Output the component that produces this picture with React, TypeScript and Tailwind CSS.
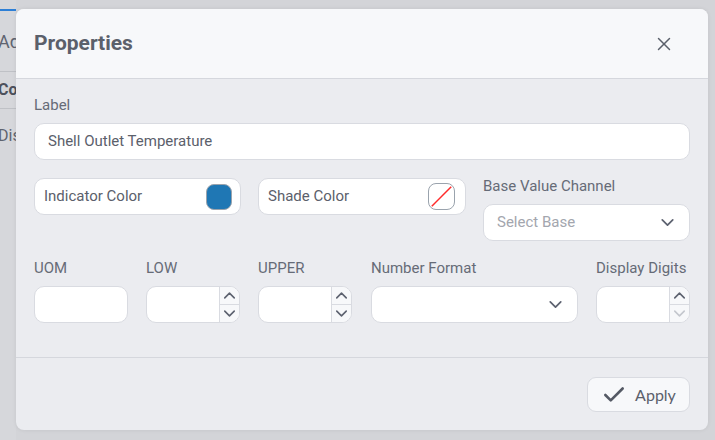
import { X, ChevronDown, ChevronUp, Check } from "lucide-react";

const font = { fontFamily: "Roboto, 'Liberation Sans', sans-serif" };

const FieldLabel = ({ children }: { children: React.ReactNode }) => (
  <div className="text-[15px] leading-[18px] text-[#666b77] mb-[9px]">{children}</div>
);

const boxCls =
  "h-[37px] bg-white border border-[#d9dbe1] rounded-[10px] flex items-center";

const Spin = ({ disabledDown }: { disabledDown?: boolean }) => (
  <div className={boxCls + " w-[94px] justify-end overflow-hidden"}>
    <div className="h-full w-[20px] border-l border-[#d9dbe1] flex flex-col bg-[#f7f8fa]">
      <div className="flex-1 flex items-center justify-center border-b border-[#d9dbe1] overflow-hidden">
        <ChevronUp size={19} strokeWidth={2} className="shrink-0 text-[#5d6270]" />
      </div>
      <div className="flex-1 flex items-center justify-center overflow-hidden">
        <ChevronDown
          size={19}
          strokeWidth={2}
          className={"shrink-0 " + (disabledDown ? "text-[#c4c7ce]" : "text-[#5d6270]")}
        />
      </div>
    </div>
  </div>
);

export default function App() {
  return (
    <div className="relative w-[715px] h-[440px] overflow-hidden bg-[#d3d4d8]" style={font}>
      {/* app behind the overlay */}
      <div className="w-[16px] h-full bg-[#d6d7db]">
        <div className="h-[9px]" />
        <div className="h-[2px] bg-[#2d7fd6]" />
        <div className="h-[61px] flex items-center border-b border-[#bfc1c6] overflow-hidden">
          <span className="ml-[-2px] text-[18px] text-[#5f6470] whitespace-nowrap">Add</span>
        </div>
        <div className="h-[37px] flex items-center border-b border-[#bfc1c6] overflow-hidden">
          <span className="ml-[-2px] text-[16px] font-bold text-[#4c515c] whitespace-nowrap">Con</span>
        </div>
        <div className="h-[54px] flex items-center overflow-hidden">
          <span className="ml-[-2px] text-[16px] text-[#5f6470] whitespace-nowrap">Dis</span>
        </div>
      </div>

      {/* modal */}
      <div className="absolute left-[16px] top-[9px] w-[692px] h-[421px] rounded-[8px] overflow-hidden bg-[#ebecf0] flex flex-col shadow-[0_0_4px_rgba(0,0,0,0.08)]">
        <div className="h-[70px] bg-[#f7f8fa] border-b border-[#d5d7dd] flex items-center justify-between pl-[18px] pr-[33px]">
          <div className="text-[21px] font-bold text-[#5b606b]">Properties</div>
          <X size={22} strokeWidth={1.6} className="text-[#5b606b]" />
        </div>

        <div className="flex-1 px-[18px] pt-[17px]">
          <FieldLabel>Label</FieldLabel>
          <div className={boxCls + " w-[656px] h-[36px] px-[13px] text-[15px] text-[#5b606b]"}>
            Shell Outlet Temperature
          </div>

          <div className="flex gap-[17px] mt-[18px] items-start">
            <div className={boxCls + " w-[207px] h-[36px] justify-between pl-[9px] pr-[8px] text-[15px] text-[#5b606b]"}>
              <span>Indicator Color</span>
              <div className="w-[26px] h-[26px] rounded-[8px] bg-[#1f77b4] border border-[#9aa3ad]" />
            </div>
            <div className={boxCls + " w-[208px] h-[36px] justify-between pl-[9px] pr-[10px] text-[15px] text-[#5b606b]"}>
              <span>Shade Color</span>
              <div className="relative w-[27px] h-[27px] rounded-[8px] bg-white border border-[#9aa3ad] overflow-hidden">
                <svg viewBox="0 0 27 27" className="absolute inset-0 w-full h-full">
                  <line x1="3" y1="24" x2="24" y2="3" stroke="#ff2b2b" strokeWidth="1.6" />
                </svg>
              </div>
            </div>
            <div className="mt-[-1px]">
              <FieldLabel>Base Value Channel</FieldLabel>
              <div className={boxCls + " w-[207px] justify-between pl-[13px] pr-[11px] text-[15px] text-[#a3a6ae]"}>
                <span>Select Base</span>
                <ChevronDown size={21} strokeWidth={2} className="text-[#5d6270]" />
              </div>
            </div>
          </div>

          <div className="flex mt-[18px]">
            <div className="w-[112px]">
              <FieldLabel>UOM</FieldLabel>
              <div className={boxCls + " w-[94px]"} />
            </div>
            <div className="w-[112px]">
              <FieldLabel>LOW</FieldLabel>
              <Spin />
            </div>
            <div className="w-[113px]">
              <FieldLabel>UPPER</FieldLabel>
              <Spin />
            </div>
            <div className="w-[225px]">
              <FieldLabel>Number Format</FieldLabel>
              <div className={boxCls + " w-[207px] justify-end pr-[11px]"}>
                <ChevronDown size={21} strokeWidth={2} className="text-[#5d6270]" />
              </div>
            </div>
            <div>
              <FieldLabel>Display Digits</FieldLabel>
              <Spin disabledDown />
            </div>
          </div>
        </div>

        <div className="h-[73px] border-t border-[#d5d7dd] flex items-center justify-end pr-[18px]">
          <button
            className="w-[103px] h-[35px] rounded-[9px] border border-[#d9dbe1] bg-[#f7f8fa] flex items-center justify-center gap-[8px] text-[16px] text-[#5b606b] mt-[1px]"
            style={{ fontFamily: "Lato, 'Liberation Sans', sans-serif" }}
          >
            <Check size={26} strokeWidth={2.4} className="text-[#545964]" />
            <span>Apply</span>
          </button>
        </div>
      </div>
    </div>
  );
}
